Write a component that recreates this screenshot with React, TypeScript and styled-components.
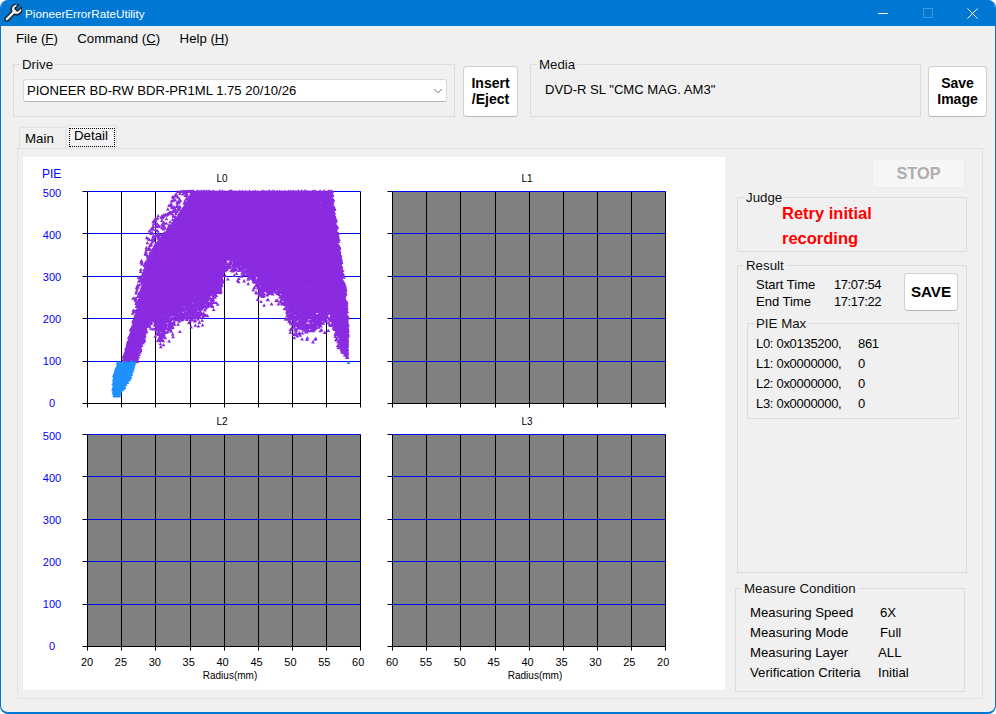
import React from 'react';
import styled, { createGlobalStyle } from 'styled-components';
import { ChevronDown } from 'lucide-react';

const GlobalStyle = createGlobalStyle`
  html, body {
    margin: 0;
    padding: 0;
    background: #fff;
  }
  body {
    font-family: "Liberation Sans", Arial, sans-serif;
    font-size: 13px;
    color: #000;
  }
`;

const Window = styled.div`
  width: 996px;
  height: 714px;
  box-sizing: border-box;
  display: flex;
  flex-direction: column;
  background: #f0f0f0;
  border: 1px solid #0078d4;
  border-top: 0;
  border-bottom-width: 2px;
  border-radius: 8px;
  overflow: hidden;
`;

const TitleBar = styled.div`
  height: 26px;
  flex: none;
  display: flex;
  align-items: center;
  padding-left: 3px;
  background: #0078d4;
  color: #fff;
  font-size: 11.7px;
`;

const TitleText = styled.span`
  margin-left: 3px;
  flex: 1;
`;

const WindowButton = styled.div`
  width: 45px;
  height: 26px;
  display: flex;
  align-items: center;
  justify-content: center;
`;

const MenuBar = styled.div`
  height: 24px;
  flex: none;
  display: flex;
  align-items: center;
  gap: 19.5px;
  padding-left: 15px;
  margin-bottom: 8px;
  font-size: 13.2px;
`;

const Key = styled.span`
  text-decoration: underline;
`;

const TopRow = styled.div`
  display: flex;
  align-items: flex-start;
  height: 59px;
  padding-left: 12px;
`;

const Group = styled.fieldset<{ $w: number; $h: number }>`
  box-sizing: border-box;
  width: ${p => p.$w}px;
  height: ${p => p.$h}px;
  min-width: 0;
  flex: none;
  margin: 0;
  padding: 0;
  border: 1px solid #dcdcdc;
`;

const Legend = styled.legend`
  margin-left: 6px;
  padding: 0 2px;
  font-size: 13.3px;
  line-height: 13px;
  color: #111;
`;

const Combo = styled.div`
  box-sizing: border-box;
  width: 424px;
  height: 23px;
  margin: 8px 0 0 9px;
  display: flex;
  align-items: center;
  justify-content: space-between;
  padding: 0 1px 0 3px;
  background: #fff;
  border: 1px solid #d9d9d9;
  border-bottom-color: #b4b4b4;
  border-radius: 3px;
  font-size: 13.1px;
`;

const PushButton = styled.button<{ $w: number; $h: number; $size: number }>`
  box-sizing: border-box;
  width: ${p => p.$w}px;
  height: ${p => p.$h}px;
  flex: none;
  padding: 0;
  background: #fff;
  border: 1px solid #d0d0d0;
  border-bottom-color: #b8b8b8;
  border-radius: 4px;
  font-family: inherit;
  font-size: ${p => p.$size}px;
  font-weight: 700;
  line-height: 16px;
  color: #000;
`;

const TopButton = styled(PushButton)<{ $left: number }>`
  margin: 8px 0 0 ${p => p.$left}px;
  padding-bottom: 2px;
`;

const MediaGroup = styled(Group)`
  margin-left: 12px;
`;

const MediaText = styled.div`
  padding: 11px 0 0 14px;
  font-size: 13.1px;
  line-height: 16px;
`;

const Tabs = styled.div`
  display: flex;
  align-items: flex-end;
  height: 23px;
  margin-top: 8px;
  padding-left: 18px;
`;

const Tab = styled.div`
  box-sizing: border-box;
  height: 21px;
  width: 47px;
  padding: 3px 0 0 5px;
  background: #f0f0f0;
  border: 1px solid #e2e2e2;
  border-bottom: 0;
  font-size: 13.3px;
`;

const ActiveTab = styled.div`
  box-sizing: border-box;
  height: 23px;
  width: 51px;
  padding: 2px 0 0 2px;
  background: #f3f3f3;
  border: 1px solid #e2e2e2;
  border-bottom: 0;
  font-size: 13.3px;
`;

const FocusLabel = styled.div`
  box-sizing: border-box;
  width: 46px;
  height: 19px;
  padding-left: 5px;
  line-height: 15px;
  outline: 1px dotted #000;
  outline-offset: -1px;
`;

const TabPanel = styled.div`
  box-sizing: border-box;
  display: flex;
  width: 966px;
  height: 551px;
  margin-left: 16px;
  padding: 8px 5px;
  border: 1px solid #e2e2e2;
`;

const ChartArea = styled.div`
  width: 702px;
  height: 533px;
  flex: none;
  display: grid;
  grid-template-columns: 359px 343px;
  grid-template-rows: 252px 281px;
  background: #fff;
`;

const Side = styled.div`
  margin-left: 12px;
  width: 230px;
  display: flex;
  flex-direction: column;
`;

const StopRow = styled.div`
  display: flex;
  justify-content: flex-end;
  margin: 2px 0 3px;
  padding-right: 2px;
`;

const StopButton = styled.button`
  width: 93px;
  height: 29px;
  padding: 0;
  background: #f6f6f6;
  border: 1px solid #ececec;
  border-radius: 3px;
  font-family: inherit;
  font-size: 16.3px;
  font-weight: 700;
  color: #adadad;
`;

const JudgeText = styled.div`
  margin: -3px 0 0 44px;
  color: #ff0000;
  font-size: 16.5px;
  font-weight: 700;
  line-height: 25px;
`;

const ResultGroup = styled(Group)`
  margin-top: 7px;
`;

const TimeBlock = styled.div`
  display: flex;
  justify-content: space-between;
  height: 45px;
  padding: 1px 8px 0 18px;
  box-sizing: border-box;
`;

const TimeGrid = styled.div`
  display: grid;
  grid-template-columns: 78px auto;
  grid-auto-rows: 17px;
  align-items: center;
  padding-top: 3px;
  font-size: 13px;
`;

const Digits = styled.span`
  letter-spacing: -0.45px;
`;

const PieGroup = styled(Group)`
  margin-left: 9px;
  padding-top: 4px;
`;

const PieRow = styled.div`
  display: grid;
  grid-template-columns: 102px auto;
  height: 20px;
  padding-left: 8px;
  line-height: 20px;
  font-size: 13px;
  letter-spacing: -0.3px;
`;

const ConditionGroup = styled(Group)`
  margin: 9px 0 0 -2px;
  padding-top: 8px;
`;

const ConditionRow = styled.div<{ $label: number }>`
  display: grid;
  grid-template-columns: ${p => p.$label}px auto;
  height: 20px;
  padding-left: 14px;
  line-height: 20px;
  font-size: 13.2px;
`;

const AxisText = styled.text`
  font-family: "Liberation Sans", Arial, sans-serif;
`;

// seeded so the scatter comes out the same on every load
const makeRandom = (seed: number) => () => {
  seed = (seed * 16807) % 2147483647;
  return seed / 2147483647;
};

const lerp = (table: number[][], x: number) => {
  for (let i = 1; i < table.length; i++) {
    if (x <= table[i][0]) {
      const [x0, y0] = table[i - 1];
      const [x1, y1] = table[i];
      return y0 + ((y1 - y0) * (x - x0)) / (x1 - x0);
    }
  }
  return table[table.length - 1][1];
};

// outline of the L0 cloud, in px inside the plot box (0,0 = top left of the plot)
const upper = [
  [35, 169], [43, 140], [50, 115], [58, 75], [66, 55], [80, 38], [95, 18], [105, 0],
  [244, 0], [250, 42], [253, 69], [258, 102], [261, 136], [261, 169],
];
const lower = [
  [35, 170], [50, 170], [61, 135], [66, 128], [71, 150], [90, 130], [113, 126],
  [133, 100], [138, 76], [153, 80], [166, 90], [175, 106], [190, 100],
  [205, 136], [226, 140], [243, 127], [250, 155], [261, 169],
];
// left and right edge of the blue blob by y
const blobLeft = [[170, 31], [185, 26.5], [198, 26], [205, 27]];
const blobRight = [[170, 49], [185, 44], [198, 36], [205, 31]];

const triangle = (x: number, y: number) =>
  `M${x.toFixed(1)} ${(y - 1.7).toFixed(1)}l1.9 3.3h-3.8z`;

const buildPurple = () => {
  const rnd = makeRandom(4711);
  let d = '';
  for (let x = 35; x <= 261; x += 1.25) {
    const top = lerp(upper, x);
    const bottom = lerp(lower, x);
    for (let y = top; y <= bottom; y += 1.25) {
      const t = (y - top) / Math.max(bottom - top, 1);
      const keep = t < 0.8 ? 1 : 1 - (t - 0.8) * 2.6;
      if (rnd() < keep) {
        const jx = x + (rnd() - 0.5) * 1.25;
        d += triangle(jx, Math.max(y + (rnd() - 0.5) * 1.25, -1));
      }
    }
  }
  // stray points around the outline
  for (let i = 0; i < 240; i++) {
    const x = 45 + rnd() * 60;
    d += triangle(x, Math.max(lerp(upper, x) - rnd() * 26, 0));
  }
  for (let i = 0; i < 40; i++) {
    const x = 244 + rnd() * 16;
    d += triangle(x, Math.max(lerp(upper, x) - rnd() * 7, 0));
  }
  for (let i = 0; i < 130; i++) {
    const x = 60 + rnd() * 185;
    d += triangle(x, lerp(lower, x) + rnd() * 11);
  }
  return d;
};

const buildBlue = () => {
  const rnd = makeRandom(913);
  let d = '';
  for (let y = 171; y <= 205; y += 1.5) {
    const left = lerp(blobLeft, y);
    const right = lerp(blobRight, y);
    for (let x = left; x <= right; x += 1.5) {
      d += triangle(x + (rnd() - 0.5), y + (rnd() - 0.5));
    }
  }
  d += triangle(261, 171);
  return d;
};

const PURPLE = buildPurple();
const BLUE = buildBlue();

const GRID_X = [0, 34, 68, 103, 137, 171, 205, 239, 273];
const GRID_Y = [0, 42, 85, 127, 170, 212];
const RADIUS = [20, 25, 30, 35, 40, 45, 50, 55, 60];
const PIE = [500, 400, 300, 200, 100, 0];

interface PlotProps {
  title: string;
  originX: number;
  originY: number;
  hasData?: boolean;
  leftAxis?: boolean;
  pieLabel?: boolean;
  radiusAxis?: number[];
}

const PlotSvg = styled.svg`
  display: block;
  width: 100%;
  height: 100%;
`;

const Plot = ({ title, originX, originY, hasData, leftAxis, pieLabel, radiusAxis }: PlotProps) => (
  <PlotSvg>
    {pieLabel && (
      <AxisText x={19} y={21} fontSize={12} fill="#0000ff">
        PIE
      </AxisText>
    )}
    <AxisText x={originX + 135} y={originY - 9} fontSize={10} textAnchor="middle" fill="#000">
      {title}
    </AxisText>
    <g transform={`translate(${originX + 0.5} ${originY + 0.5})`}>
      {!hasData && <rect width={273} height={212} fill="#808080" />}
      {GRID_X.map(x => (
        <line key={x} x1={x} x2={x} y1={0} y2={216} stroke="#000" />
      ))}
      {GRID_Y.map(y => (
        <line key={y} x1={-5} x2={0} y1={y} y2={y} stroke="#000" />
      ))}
      {GRID_Y.map((y, i) => (
        <line
          key={`h${y}`}
          x1={0}
          x2={273}
          y1={y}
          y2={y}
          stroke={i === GRID_Y.length - 1 ? '#000' : '#0000ff'}
          strokeWidth={1.2}
        />
      ))}
      {hasData && (
        <>
          <path d={PURPLE} fill="#8a2be2" />
          <path d={BLUE} fill="#1e90ff" />
        </>
      )}
    </g>
    {leftAxis &&
      PIE.map((v, i) => (
        <AxisText
          key={v}
          x={originX - 35}
          y={originY + 5.5 + i * 42.1}
          fontSize={11}
          textAnchor="middle"
          fill="#0000ff"
        >
          {v}
        </AxisText>
      ))}
    {radiusAxis && (
      <>
        {radiusAxis.map((v, i) => (
          <AxisText
            key={i}
            x={originX + i * 33.9}
            y={originY + 232}
            fontSize={11}
            textAnchor="middle"
            fill="#000"
          >
            {v}
          </AxisText>
        ))}
        <AxisText x={originX + 143} y={originY + 245} fontSize={10} textAnchor="middle" fill="#000">
          Radius(mm)
        </AxisText>
      </>
    )}
  </PlotSvg>
);

const AppIcon = () => (
  <svg width="18" height="18" viewBox="2 2 20 20">
    <path
      d="M14.7 6.3a1 1 0 0 0 0 1.4l1.6 1.6a1 1 0 0 0 1.4 0l3.8-3.8a6 6 0 0 1-7.9 7.9l-6.9 6.9a2.1 2.1 0 0 1-3-3l6.9-6.9a6 6 0 0 1 7.9-7.9z"
      fill="#f2f2f2"
      stroke="#1c2730"
      strokeWidth="1.7"
      strokeLinejoin="round"
    />
  </svg>
);

export default function App() {
  return (
    <>
      <GlobalStyle />
      <Window>
        <TitleBar>
          <AppIcon />
          <TitleText>PioneerErrorRateUtility</TitleText>
          <WindowButton>
            <svg width="10" height="10">
              <path d="M0 5.5h10" stroke="#fff" />
            </svg>
          </WindowButton>
          <WindowButton>
            <svg width="10" height="10">
              <rect x=".5" y=".5" width="9" height="9" fill="none" stroke="#3b97de" />
            </svg>
          </WindowButton>
          <WindowButton>
            <svg width="11" height="11">
              <path d="M.5.5l10 10M10.5.5l-10 10" stroke="#fff" />
            </svg>
          </WindowButton>
        </TitleBar>
        <MenuBar>
          <span>
            File (<Key>F</Key>)
          </span>
          <span>
            Command (<Key>C</Key>)
          </span>
          <span>
            Help (<Key>H</Key>)
          </span>
        </MenuBar>
        <TopRow>
          <Group $w={442} $h={59}>
            <Legend>Drive</Legend>
            <Combo>
              PIONEER BD-RW BDR-PR1ML 1.75 20/10/26
              <ChevronDown size={14} color="#555" strokeWidth={1.4} />
            </Combo>
          </Group>
          <TopButton $w={55} $h={51} $left={8} $size={14}>
            Insert
            <br />
            /Eject
          </TopButton>
          <MediaGroup $w={391} $h={59}>
            <Legend>Media</Legend>
            <MediaText>DVD-R SL "CMC MAG. AM3"</MediaText>
          </MediaGroup>
          <TopButton $w={59} $h={51} $left={7} $size={14}>
            Save
            <br />
            Image
          </TopButton>
        </TopRow>
        <Tabs>
          <Tab>Main</Tab>
          <ActiveTab>
            <FocusLabel>Detail</FocusLabel>
          </ActiveTab>
        </Tabs>
        <TabPanel>
          <ChartArea>
            <Plot title="L0" originX={64} originY={34} hasData leftAxis pieLabel />
            <Plot title="L1" originX={10} originY={34} />
            <Plot title="L2" originX={64} originY={25} leftAxis radiusAxis={RADIUS} />
            <Plot title="L3" originX={10} originY={25} radiusAxis={[...RADIUS].reverse()} />
          </ChartArea>
          <Side>
            <StopRow>
              <StopButton disabled>STOP</StopButton>
            </StopRow>
            <Group $w={230} $h={61}>
              <Legend>Judge</Legend>
              <JudgeText>
                Retry initial
                <br />
                recording
              </JudgeText>
            </Group>
            <ResultGroup $w={230} $h={314}>
              <Legend>Result</Legend>
              <TimeBlock>
                <TimeGrid>
                  <span>Start Time</span>
                  <Digits>17:07:54</Digits>
                  <span>End Time</span>
                  <Digits>17:17:22</Digits>
                </TimeGrid>
                <PushButton $w={54} $h={38} $size={15.2}>
                  SAVE
                </PushButton>
              </TimeBlock>
              <PieGroup $w={212} $h={102}>
                <Legend>PIE Max</Legend>
                <PieRow><span>L0: 0x0135200,</span><span>861</span></PieRow>
                <PieRow><span>L1: 0x0000000,</span><span>0</span></PieRow>
                <PieRow><span>L2: 0x0000000,</span><span>0</span></PieRow>
                <PieRow><span>L3: 0x0000000,</span><span>0</span></PieRow>
              </PieGroup>
            </ResultGroup>
            <ConditionGroup $w={230} $h={110}>
              <Legend>Measure Condition</Legend>
              <ConditionRow $label={130}><span>Measuring Speed</span><span>6X</span></ConditionRow>
              <ConditionRow $label={130}><span>Measuring Mode</span><span>Full</span></ConditionRow>
              <ConditionRow $label={128}><span>Measuring Layer</span><span>ALL</span></ConditionRow>
              <ConditionRow $label={128}><span>Verification Criteria</span><span>Initial</span></ConditionRow>
            </ConditionGroup>
          </Side>
        </TabPanel>
      </Window>
    </>
  );
}
